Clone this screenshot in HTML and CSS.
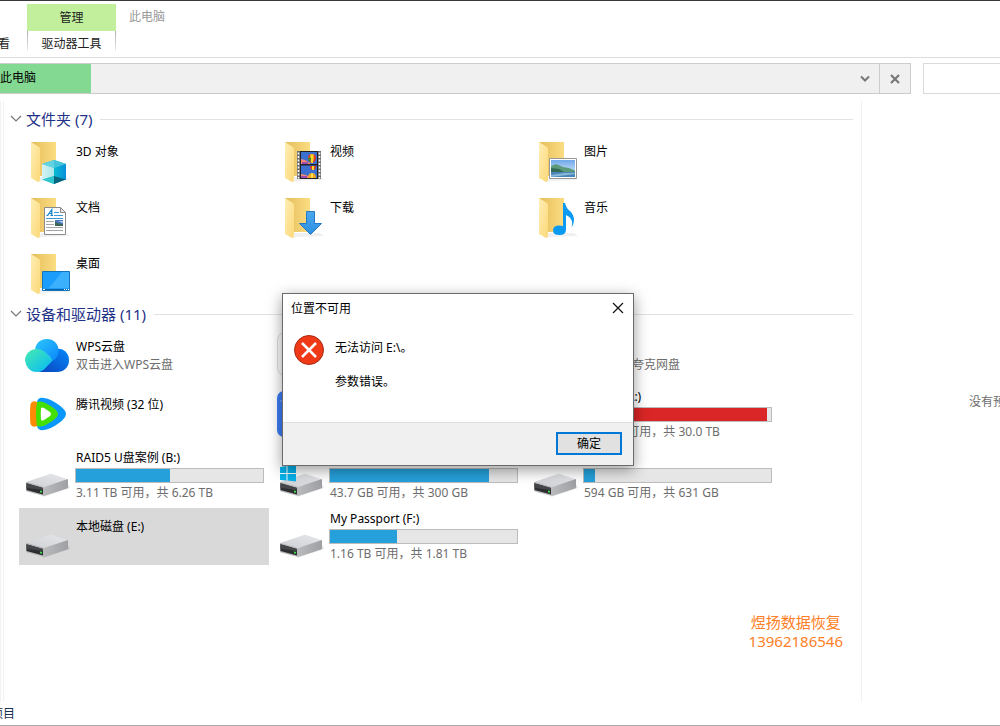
FILE: index.html
```html
<!DOCTYPE html>
<html lang="zh-CN">
<head>
<meta charset="UTF-8" />
<meta name="viewport" content="width=device-width, initial-scale=1" />
<title>此电脑</title>
<link rel="stylesheet" href="styles.css">
</head>
<body>

  <!-- 图标定义 -->
  <svg class="defs" aria-hidden="true">
    <defs>
      <linearGradient id="gBack" x1="0" y1="0" x2="1" y2="0">
        <stop offset="0" stop-color="#e5bd5b"/><stop offset="1" stop-color="#fbdd82"/>
      </linearGradient>
      <linearGradient id="gFlap" x1="0" y1="0" x2="1" y2="1">
        <stop offset="0" stop-color="#ffeeb4"/><stop offset="1" stop-color="#fbd879"/>
      </linearGradient>
      <linearGradient id="gCubeL" x1="0" y1="0" x2="1" y2="0">
        <stop offset="0" stop-color="#d5f2f3"/><stop offset="1" stop-color="#a9e7ea"/>
      </linearGradient>
      <linearGradient id="gCubeR" x1="0" y1="0" x2="1" y2="0">
        <stop offset="0" stop-color="#08bccf"/><stop offset="1" stop-color="#0a8fdc"/>
      </linearGradient>
      <linearGradient id="gSky" x1="0" y1="0" x2="0" y2="1">
        <stop offset="0" stop-color="#6fa8ea"/><stop offset="1" stop-color="#e8f6fb"/>
      </linearGradient>
      <linearGradient id="gArrow" x1="0" y1="0" x2="0" y2="1">
        <stop offset="0" stop-color="#4aa8f0"/><stop offset="1" stop-color="#2e8fe2"/>
      </linearGradient>
      <linearGradient id="gWpsL" x1="0" y1="0" x2="1" y2="1">
        <stop offset="0" stop-color="#46ecae"/><stop offset="1" stop-color="#05b6fb"/>
      </linearGradient>
      <linearGradient id="gWpsT" x1="0" y1="0" x2="1" y2="1">
        <stop offset="0" stop-color="#2cc8fb"/><stop offset="1" stop-color="#0a86fb"/>
      </linearGradient>
      <linearGradient id="gWpsR" x1="1" y1="0" x2="0" y2="1">
        <stop offset="0" stop-color="#0689fa"/><stop offset="1" stop-color="#0a43bd"/>
      </linearGradient>
      <linearGradient id="gSide" x1="0" y1="0" x2="1" y2="0">
        <stop offset="0" stop-color="#b9babc"/><stop offset="1" stop-color="#9fa0a3"/>
      </linearGradient>
      <linearGradient id="gTop" x1="0" y1="1" x2="1" y2="0">
        <stop offset="0" stop-color="#cfd0d3"/><stop offset="1" stop-color="#e6e7ea"/>
      </linearGradient>
    </defs>

    <symbol id="folder" viewBox="0 0 48 48">
      <path d="M16 44l4-1 27-1-4-3H17z" fill="#000" opacity=".06"/>
      <path d="M8 4h25v34H8z" fill="url(#gBack)"/>
      <path d="M8 4l8 5q1 .6 1 2v29q0 4-2 4l-7-4z" fill="url(#gFlap)"/>
    </symbol>

    <symbol id="drive" viewBox="0 0 48 48">
      <path d="M20 46l27-9-2-4-24 10z" fill="#000" opacity=".1"/>
      <path d="M3 31l24-8q1-.4 2 0l15 5q1 .4 1 1L21 36z" fill="url(#gTop)"/>
      <path d="M21 36l24-8v8.500q0 .5-1 1L21 45z" fill="url(#gSide)"/>
      <path d="M3 31.500q0-.7 1-.4L20 35.600q1 .3 1 1.400v8L4 40.500q-1-.3-1-1z" fill="#b8b9bb"/>
      <path d="M3.500 32.300L20 37v6.500L3.500 39z" fill="#2d2e30"/>
      <path d="M3.500 32.300L20 37v2L3.500 37z" fill="#45464a"/>
      <path d="M17 39.500l2 .5v1.800l-2-.5z" fill="#3be04c"/>
    </symbol>
  </svg>

  <!-- 功能区 -->
  <header class="ribbon">
    <div class="view-tab">查看</div>
    <div class="tool-tab">
      <div class="tool-title">管理</div>
      <div class="tool-name">驱动器工具</div>
    </div>
    <h1 class="window-title">此电脑</h1>
  </header>

  <!-- 地址栏 -->
  <div class="address-row">
    <div class="address">
      <div class="address-progress">此电脑</div>
      <button class="drop-btn" aria-label="以前的位置">
        <svg width="10" height="8" viewBox="0 0 10 8"><path d="M1 1.500l4 4 4-4" fill="none" stroke="#777" stroke-width="2"/></svg>
      </button>
      <button class="stop-btn" aria-label="停止">
        <svg width="10" height="10" viewBox="0 0 10 10"><path d="M1 1l8 8M9 1L1 9" fill="none" stroke="#777" stroke-width="2.200"/></svg>
      </button>
    </div>
    <input class="search" type="search" aria-label="搜索">
  </div>

  <div class="main">
    <div class="rail"></div>
    <main class="content">

      <!-- 文件夹 -->
      <h2 class="group-title">
        <svg width="12" height="8" viewBox="0 0 12 8"><path d="M1 1l5 5 5-5" fill="none" stroke="#777" stroke-width="1.200"/></svg>
        <span>文件夹 (7)</span>
      </h2>
      <ul class="tiles folders">
        <li class="tile">
          <svg class="icon" viewBox="0 0 48 48">
            <use href="#folder"/>
            <path d="M31 22l12 4v15l-12 5-12-5V26z" fill="#1fb6cf"/>
            <path d="M31 22l12 4-12 4-12-4z" fill="#5fd3e0"/>
            <path d="M31 22l12 4-12 4z" fill="#43c4dc"/>
            <path d="M19 26l12 4v8l-12 4z" fill="url(#gCubeL)"/>
            <path d="M43 26l-12 4v8l12 4z" fill="url(#gCubeR)"/>
            <path d="M31 38v8l-12-4.500z" fill="#2fc6cf"/>
            <path d="M31 38v8l12-4.500z" fill="#04677f"/>
          </svg>
          <div class="info"><p class="name">3D 对象</p></div>
        </li>
        <li class="tile">
          <svg class="icon" viewBox="0 0 48 48">
            <use href="#folder"/>
            <path d="M20 13h24v28H20z" fill="#6d6d6d"/>
            <path d="M23 13h18v28H23z" fill="#222"/>
            <path d="M24 14h16v12H24zM24 27.500h16V40H24z" fill="#3b6fd0"/>
            <path d="M24 21l4 1 5 3v1h-9zM24 36l5 1 4 2v1h-9z" fill="#f08a74"/>
            <path d="M25 24h6v2h-6zM24 38h6v2h-6z" fill="#a04db0"/>
            <path d="M31 20q0-4 4-4t4 4q0 3-3 5h-2q-3-2-3-5z" fill="#e03a2a"/>
            <path d="M33.500 16.300q-1 4 .7 8.700h1.600q1.700-4.700.7-8.700z" fill="#f5d927"/>
            <path d="M31 20q2-1 3 0l-.5 4q-2-1-2.500-4z" fill="#3a8a32"/>
            <path d="M33 28h6q0 3-2 4h-2q-2-1-2-4z" fill="#e03a2a"/>
            <path d="M35 28h2v4h-2z" fill="#f5d927"/>
            <path d="M31 40q0-5 4-5t4 5z" fill="#f5a623"/>
            <path d="M34 35.200h2V40h-2z" fill="#f9e14a"/>
            <path d="M21.500 14.500v26M42.500 14.500v26" stroke="#fff" stroke-width="1.600" stroke-dasharray="2 1.500"/>
          </svg>
          <div class="info"><p class="name">视频</p></div>
        </li>
        <li class="tile">
          <svg class="icon" viewBox="0 0 48 48">
            <use href="#folder"/>
            <path d="M18.500 20.500h27v20h-27z" fill="#fff" stroke="#989898"/>
            <path d="M20 22h24v17H20z" fill="url(#gSky)"/>
            <path d="M20 28l5-2 7 3 6 1 6 2.500V34H20z" fill="#5d9a7b"/>
            <path d="M20 30l8 1 5 3H20z" fill="#356b56"/>
            <path d="M20 34h24v5H20z" fill="#4a86b8"/>
            <path d="M20 37l14-2h10v1l-24 3z" fill="#8ab8d8"/>
          </svg>
          <div class="info"><p class="name">图片</p></div>
        </li>
        <li class="tile">
          <svg class="icon" viewBox="0 0 48 48">
            <use href="#folder"/>
            <path d="M21.500 13.500h16l5 5v22h-21z" fill="#fff" stroke="#8b8b8b"/>
            <path d="M37.500 13.500v5h5z" fill="#e6e6e6" stroke="#8b8b8b"/>
            <path d="M24.500 21.500l4.300-6v6M26 19.500h3M23.500 21.500h2M27.500 21.500h2.500" fill="none" stroke="#1583cc" stroke-width="1.200"/>
            <path d="M31 18.500h5M31 21.500h9M23 24.500h17" stroke="#3a9ad9"/>
            <path d="M23 27.500h8M23 30.500h8M23 33.500h17M23 36.500h17" stroke="#a6a6a6"/>
            <path d="M32 26h8v6h-8z" fill="#4876b8"/>
            <path d="M32 28l4 1.500 4 1V32h-8z" fill="#3f6655"/>
            <path d="M35 27h5v2z" fill="#b9d5f0"/>
          </svg>
          <div class="info"><p class="name">文档</p></div>
        </li>
        <li class="tile">
          <svg class="icon" viewBox="0 0 48 48">
            <use href="#folder"/>
            <path d="M29.500 17.500h8v12h7L33.500 40.500 22.500 29.500h7z" fill="url(#gArrow)" stroke="#2579c4"/>
          </svg>
          <div class="info"><p class="name">下载</p></div>
        </li>
        <li class="tile">
          <svg class="icon" viewBox="0 0 48 48">
            <use href="#folder"/>
            <path d="M32 9h2q1 5 5 8 4 4 4 9 0 4-2.500 7.500 1.300-5 0-7.500-1.500-3.500-5.500-5v14.500q0 5.500-6.500 5.500-6.500 0-6.500-4.500 0-5 6.500-5 2 0 3.500.7z" fill="#0b9af2"/>
          </svg>
          <div class="info"><p class="name">音乐</p></div>
        </li>
        <li class="tile">
          <svg class="icon" viewBox="0 0 48 48">
            <use href="#folder"/>
            <path d="M19.500 21.500h27v19h-27z" fill="#1a9dfb" stroke="#1173bb"/>
            <path d="M46 22v16H26L39 22z" fill="#3bb0fd"/>
            <path d="M20 39h26v1H20z" fill="#0c62a4"/>
            <path d="M20 39.500h2M41 39.500h1M43 39.500h1M45 39.500h1" stroke="#fff"/>
          </svg>
          <div class="info"><p class="name">桌面</p></div>
        </li>
      </ul>

      <!-- 设备和驱动器 -->
      <h2 class="group-title">
        <svg width="12" height="8" viewBox="0 0 12 8"><path d="M1 1l5 5 5-5" fill="none" stroke="#777" stroke-width="1.200"/></svg>
        <span>设备和驱动器 (11)</span>
      </h2>
      <ul class="tiles drives">
        <li class="tile two-line">
          <svg class="icon" viewBox="0 0 48 48">
            <path d="M34 20q5-1 8.500 2.500Q46 26 46 31.500q0 5-3.500 8.300Q39 43 34 43H16z" fill="url(#gWpsR)"/>
            <path d="M12 22q0-5.500 3.500-9Q19 10 24 10q5 0 8 3 3.500 3.500 3.500 8.500 0 6-4.500 10L20 22z" fill="url(#gWpsT)"/>
            <path d="M14 20q5 0 9 4l7 7-8.500 9Q18.500 43 14 43q-5.500 0-8.500-3.500T2 31.500q0-5 3.500-8.300Q9 20 14 20z" fill="url(#gWpsL)"/>
          </svg>
          <div class="info">
            <p class="name">WPS云盘</p>
            <p class="detail">双击进入WPS云盘</p>
          </div>
        </li>
        <li class="tile two-line">
          <svg class="icon" viewBox="0 0 48 48"><rect x=".5" y="2.500" width="47" height="45" rx="9" fill="#fcfcfc" stroke="#ddd"/></svg>
        </li>
        <li class="tile two-line">
          <svg class="icon" viewBox="0 0 48 48"><circle cx="24" cy="24" r="18" fill="#3c78f0"/></svg>
          <div class="info">
            <p class="name">&nbsp;</p>
            <p class="detail">双击打开夸克网盘</p>
          </div>
        </li>
        <li class="tile">
          <svg class="icon" viewBox="0 0 48 48">
            <path d="M14 12q1-5 7-4 7 1 15 7 7 5 7 9t-7 9q-8 6-15 7-6 1-7-4z" fill="#0a98ff"/>
            <path d="M14 12v24q-5 2-6.500-2Q7 30 7 24t.5-10q1.500-4 6.500-2z" fill="#ff8a05"/>
            <path d="M14 12q5-2 12 3 9 5 9 9t-9 9q-7 5-12 3-1-5-1-12t1-12z" fill="#44df05"/>
            <path d="M18 18q1-1 3 0l6 4q2 2 0 4l-6 4q-2 1-3 0-.5-6 0-12z" fill="#fff"/>
          </svg>
          <div class="info"><p class="name">腾讯视频 (32 位)</p></div>
        </li>
        <li class="tile">
          <svg class="icon" viewBox="0 0 48 48"><rect y="1" width="48" height="46" rx="7" fill="#3c7df5"/><path d="M3 11h5" stroke="#8fb5ff"/></svg>
        </li>
        <li class="tile disk">
          <svg class="icon"><use href="#drive"/></svg>
          <div class="info">
            <p class="name">新加卷 (A:)</p>
            <div class="bar"><div class="used full" style="width: 98%"></div></div>
            <p class="detail">512 GB 可用，共 30.0 TB</p>
          </div>
        </li>
        <li class="tile disk">
          <svg class="icon"><use href="#drive"/></svg>
          <div class="info">
            <p class="name">RAID5 U盘案例 (B:)</p>
            <div class="bar"><div class="used" style="width: 50%"></div></div>
            <p class="detail">3.11 TB 可用，共 6.26 TB</p>
          </div>
        </li>
        <li class="tile disk">
          <svg class="icon" viewBox="0 0 48 48">
            <use href="#drive"/>
            <path d="M3 16l6.500-1v7H3zM10.500 15l8.500-1v8h-8.500zM3 23h6.500v6.500L3 29zM10.500 23H19v7.500l-8.500-1z" fill="#05b3ec"/>
          </svg>
          <div class="info">
            <p class="name">&nbsp;</p>
            <div class="bar"><div class="used" style="width: 85%"></div></div>
            <p class="detail">43.7 GB 可用，共 300 GB</p>
          </div>
        </li>
        <li class="tile disk">
          <svg class="icon"><use href="#drive"/></svg>
          <div class="info">
            <p class="name">&nbsp;</p>
            <div class="bar"><div class="used" style="width: 6%"></div></div>
            <p class="detail">594 GB 可用，共 631 GB</p>
          </div>
        </li>
        <li class="tile selected">
          <svg class="icon"><use href="#drive"/></svg>
          <div class="info"><p class="name">本地磁盘 (E:)</p></div>
        </li>
        <li class="tile disk">
          <svg class="icon"><use href="#drive"/></svg>
          <div class="info">
            <p class="name">My Passport (F:)</p>
            <div class="bar"><div class="used" style="width: 36%"></div></div>
            <p class="detail">1.16 TB 可用，共 1.81 TB</p>
          </div>
        </li>
      </ul>

      <div class="watermark">煜扬数据恢复<br>13962186546</div>
    </main>
    <aside class="preview">没有预览。</aside>
  </div>

  <footer class="status"><span class="count">18 个项目</span></footer>

  <!-- 错误对话框 -->
  <dialog class="error-box" open aria-labelledby="errorTitle">
    <div class="error-head">
      <h3 id="errorTitle">位置不可用</h3>
      <button class="close-btn" aria-label="关闭">
        <svg width="12" height="12" viewBox="0 0 12 12"><path d="M1 1l10 10M11 1L1 11" fill="none" stroke="#111" stroke-width="1.200"/></svg>
      </button>
    </div>
    <div class="error-body">
      <svg width="30" height="30" viewBox="0 0 30 30">
        <circle cx="15" cy="15" r="14.500" fill="#f03a17" stroke="#a52a16"/>
        <path d="M8 8l14 14M22 8L8 22" fill="none" stroke="#fff" stroke-width="2.500"/>
      </svg>
      <div class="error-text">
        <p>无法访问 E:\。</p>
        <p>参数错误。</p>
      </div>
    </div>
    <div class="error-foot">
      <button class="ok-btn">确定</button>
    </div>
  </dialog>

</body>
</html>
```

FILE: styles.css
```css
* {
  box-sizing: border-box;
}
body {
  font-family: "Noto Sans", "Noto Sans CJK SC", sans-serif;
  font-size: 12px;
  line-height: 18px;
  color: #000;
  background: #fff;
  margin: 0;
  height: 100vh;
  display: flex;
  flex-direction: column;
  overflow: hidden;
  border-top: 1px solid #38383c;
  border-bottom: 1px solid #aaa;
}
h1, h2, h3, p, ul {
  margin: 0;
  padding: 0;
  font-size: 12px;
  font-weight: 400;
}
ul {
  list-style: none;
}
button {
  font: inherit;
  padding: 0;
  border: none;
  background: none;
  display: flex;
  align-items: center;
  justify-content: center;
}
.defs {
  position: absolute;
  width: 0;
  height: 0;
}

/* 功能区 */
.ribbon {
  display: flex;
  height: 57px;
  padding-top: 3px;
  border-bottom: 1px solid #dcdcdc;
}
.view-tab {
  width: 10px;
  margin-right: 17px;
  padding-top: 31px;
  display: flex;
  justify-content: flex-end;
  white-space: nowrap;
  color: #222;
}
.tool-tab {
  width: 89px;
  text-align: center;
  color: #222;
}
.tool-title {
  height: 27px;
  line-height: 28px;
  background: #c1ef9b;
}
.tool-name {
  height: 20px;
  line-height: 26px;
  border: solid;
  border-width: 0 1px;
  border-image: linear-gradient(#aaa, #eee) 1;
}
.window-title {
  margin-left: 13px;
  padding-top: 4px;
  color: #999;
}

/* 地址栏 */
.address-row {
  display: flex;
  gap: 12px;
  padding-top: 5px;
}
.address {
  flex: 0 0 911px;
  height: 31px;
  display: flex;
  background: #f0f0f0;
  border: 1px solid #ccc;
  border-left: none;
}
.address-progress {
  width: 91px;
  line-height: 28px;
  background: #84d992;
}
.drop-btn {
  width: 29px;
  margin-left: auto;
}
.stop-btn {
  width: 31px;
  border-left: 1px solid #ccc;
}
.search {
  flex: 1;
  min-width: 0;
  border: 1px solid #d9d9d9;
  border-right: none;
  outline: none;
}

/* 内容区 */
.main {
  flex: 1;
  display: flex;
  min-height: 0;
  padding-top: 7px;
}
.rail {
  flex: none;
  width: 4px;
  border: solid #f2f2f2;
  border-width: 0 1px;
}
.content {
  flex: 0 0 858px;
  padding: 7px 8px 0 6px;
  border-right: 1px solid #f2f2f2;
}
.group-title {
  display: flex;
  align-items: center;
  gap: 4px;
  height: 22px;
  font-size: 15px;
  color: #1e3287;
}
.group-title::after {
  content: "";
  flex: 1;
  height: 1px;
  margin-left: 4px;
  background: #e2e2e2;
}
.tiles {
  display: grid;
  grid-template-columns: repeat(auto-fill, 250px);
  gap: 4px;
  padding-left: 9px;
}
.folders {
  padding-top: 4px;
  padding-bottom: 5px;
}
.tile {
  display: flex;
  gap: 4px;
  height: 52px;
  padding: 4px;
}
.drives .tile {
  height: 57px;
}
.selected {
  background: #d9d9d9;
}
.icon {
  width: 48px;
  height: 48px;
  flex: none;
}
.info {
  width: 189px;
  padding-top: 5px;
}
.name, .detail {
  padding-left: 1px;
  white-space: nowrap;
}
.detail {
  color: #6d6d6d;
}
.drives .info {
  padding-top: 6px;
}
.drives .two-line .info {
  padding-top: 9px;
}
.drives .disk .info {
  margin-top: -2px;
  padding-top: 0;
}
.bar {
  height: 15px;
  margin-top: 1px;
  margin-bottom: 1px;
  background: #e6e6e6;
  border: 1px solid #bcbcbc;
}
.used {
  height: 100%;
  background: #26a0da;
}
.used.full {
  background: #da2626;
}
.watermark {
  width: fit-content;
  margin: 48px 10px 0 auto;
  text-align: center;
  font-size: 15px;
  line-height: 19px;
  color: #ff7f27;
}
.preview {
  flex: 1;
  min-width: 0;
  overflow: hidden;
  padding: 292px 0 0 107px;
  color: #6d6d6d;
  white-space: nowrap;
}

/* 状态栏 */
.status {
  height: 23px;
  padding-top: 3px;
}
.count {
  display: flex;
  justify-content: flex-end;
  width: 15px;
  white-space: nowrap;
  color: #1d2f4f;
}

/* 错误对话框 */
.error-box {
  position: absolute;
  left: 282px;
  top: 293px;
  width: 352px;
  margin: 0;
  padding: 0;
  color: #000;
  background: #fff;
  border: 1px solid #6b6b6b;
  box-shadow: 0 4px 14px rgba(0,0,0,0.4);
}
.error-head {
  display: flex;
  justify-content: space-between;
  height: 30px;
  padding-left: 8px;
  line-height: 30px;
}
.close-btn {
  width: 30px;
  height: 28px;
}
.error-body {
  display: flex;
  gap: 11px;
  height: 98px;
  padding: 11px;
}
.error-text {
  display: flex;
  flex-direction: column;
  gap: 16px;
  padding-top: 4px;
}
.error-foot {
  display: flex;
  justify-content: flex-end;
  height: 43px;
  padding: 9px 11px;
  background: #f0f0f0;
  border-top: 1px solid #dfdfdf;
}
.ok-btn {
  width: 66px;
  height: 23px;
  background: #e1e1e1;
  border: 2px solid #0078d7;
}
```
